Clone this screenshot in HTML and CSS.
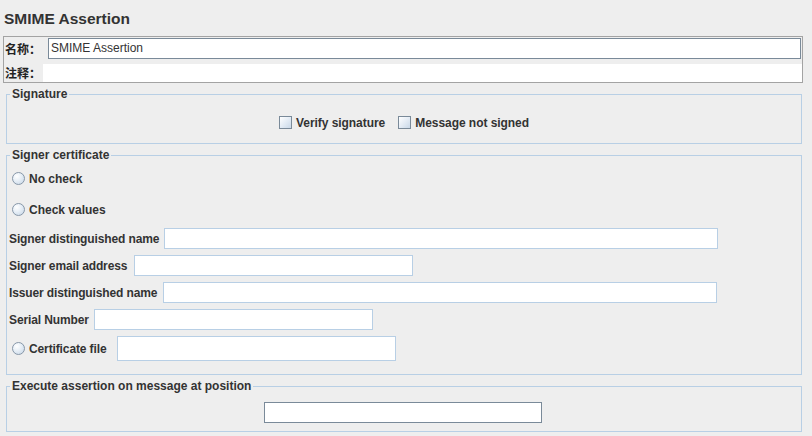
FILE: index.html
```html
<!DOCTYPE html>
<html>
<head>
<meta charset="utf-8">
<link rel="stylesheet" href="styles.css">
</head>
<body>
<div class="title">SMIME Assertion</div>
<div class="namebox">
  <div class="nrow first">
    <span class="nlabel name">名称：</span>
    <div class="tf dark name-field">SMIME Assertion</div>
  </div>
  <div class="nrow second">
    <span class="nlabel comment-label">注释：</span>
    <div class="comment"></div>
  </div>
</div>

<fieldset class="group sig">
  <legend>Signature</legend>
  <div class="checks">
    <label class="opt"><span class="cb"></span>Verify signature</label>
    <label class="opt"><span class="cb"></span>Message not signed</label>
  </div>
</fieldset>

<fieldset class="group signer">
  <legend>Signer certificate</legend>
  <div class="row radio-row r1"><span class="rb"></span>No check</div>
  <div class="row radio-row r2"><span class="rb"></span>Check values</div>
  <div class="row field-row f1"><span class="flabel w-sdn">Signer distinguished name</span><div class="tf light wide"></div></div>
  <div class="row field-row f2"><span class="flabel w-sea">Signer email address</span><div class="tf light narrow"></div></div>
  <div class="row field-row f2"><span class="flabel w-idn">Issuer distinguished name</span><div class="tf light wide"></div></div>
  <div class="row field-row f2"><span class="flabel w-sn">Serial Number</span><div class="tf light narrow"></div></div>
  <div class="row radio-row f3"><span class="rb"></span><span class="flabel w-cf">Certificate file</span><div class="tf light narrow tall"></div></div>
</fieldset>

<fieldset class="group exec">
  <legend>Execute assertion on message at position</legend>
  <div class="exec-row"><div class="tf dark pos"></div></div>
</fieldset>
</body>
</html>
```

FILE: styles.css
```css
* { box-sizing: border-box; }

body {
  margin: 0;
  background: #eeeeee;
  font-family: "Liberation Sans", Arial, sans-serif;
  font-size: 12px;
  font-weight: bold;
  color: #333333;
}

.title {
  height: 36px;
  padding: 10px 0 0 4px;
  font-size: 15.5px;
  line-height: 18px;
}

.namebox {
  margin-left: 3px;
  width: 800px;
  height: 47px;
  border: 1px solid #a3a3a3;
}

.nrow {
  display: flex;
  align-items: center;
}

.nrow.first {
  height: 22px;
  padding-top: 1px;
  padding-right: 1px;
}

.nrow.second {
  height: 18px;
  margin-top: 5px;
}

.nlabel {
  font-family: "Noto Sans CJK SC", "Liberation Sans", sans-serif;
  font-weight: bold;
  font-size: 12px;
  line-height: 14px;
  padding-left: 1px;
  flex: none;
  color: #222;
}

.nlabel.name { width: 44px; }
.nlabel.comment-label { width: 39px; }

.comment {
  flex: 1;
  height: 18px;
  background: #ffffff;
}

.tf {
  height: 21px;
  background: #ffffff;
  border: 1px solid #b8cfe5;
  flex: none;
}

.tf.dark {
  border-color: #7a8a99;
}

.name-field {
  flex: 1;
  font-weight: normal;
  font-size: 12px;
  line-height: 19px;
  padding-left: 2px;
  color: #333;
}

.group {
  margin: 4px 0 0 6px;
  width: 796px;
  min-width: 0;
  border: 1px solid #b8cfe5;
  padding: 0;
}

.group legend {
  margin-left: 3px;
  padding: 0 2px;
  line-height: 14px;
  font-size: 12px;
  font-weight: bold;
}

.sig .checks {
  display: flex;
  justify-content: center;
  align-items: center;
  gap: 13px;
  height: 21px;
  margin: 11px 0 10px;
}

.opt {
  display: flex;
  align-items: center;
  gap: 4px;
  line-height: 14px;
  letter-spacing: -0.05px;
}

.cb {
  width: 13px;
  height: 13px;
  border: 1px solid #7a8a99;
  background: linear-gradient(135deg, #ffffff 0%, #e4ecf5 50%, #c9d8e8 100%);
  flex: none;
}

.rb {
  width: 13px;
  height: 13px;
  border: 1px solid #8797a8;
  border-radius: 50%;
  background: radial-gradient(circle at 35% 30%, #ffffff 0%, #e6eef6 45%, #c4d4e5 100%);
  flex: none;
  margin-right: 4px;
}

.row {
  display: flex;
  align-items: center;
  height: 21px;
  line-height: 14px;
}

.radio-row { padding-left: 5px; }
.field-row { padding-left: 2px; }

.r1 { margin-top: 6px; }
.r2 { margin-top: 10px; }
.f1 { margin-top: 8px; }
.f2 { margin-top: 6px; }
.f3 { margin-top: 6px; height: 25px; margin-bottom: 13px; }

.flabel {
  margin-right: 5px;
  flex: none;
  white-space: nowrap;
  letter-spacing: -0.12px;
}

.w-sdn { width: 150px; }
.w-sea { width: 120px; }
.w-idn { width: 149px; }
.w-sn { width: 80px; }
.w-cf { width: 79px; margin-right: 9px; }

.tf.wide { width: 554px; }
.tf.narrow { width: 279px; }
.tf.tall { height: 25px; }

.exec-row {
  display: flex;
  justify-content: center;
  margin: 9px 0 8px;
}

.tf.pos {
  width: 278px;
  margin-right: 2px;
}
```
